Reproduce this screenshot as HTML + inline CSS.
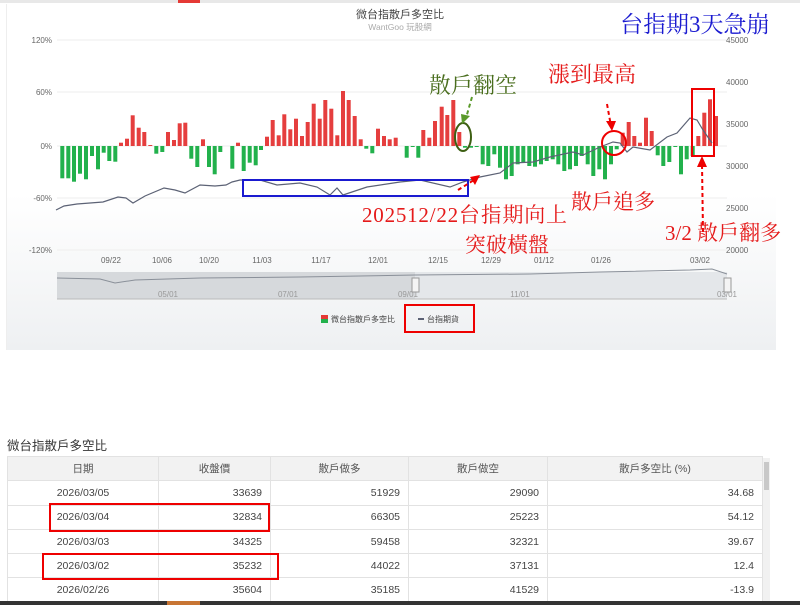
<!DOCTYPE html>
<html><head><meta charset="utf-8">
<style>
*{margin:0;padding:0;box-sizing:border-box}
body{width:800px;height:605px;background:#fff;position:relative;overflow:hidden;font-family:"Liberation Sans","Noto Sans CJK TC",sans-serif;color:#333}
.abs{position:absolute}
table{border-collapse:collapse;position:absolute;left:7px;top:456px;width:756px;font-size:10.5px;color:#444}
td,th{border:1px solid #e2e2e2;height:24.3px;font-weight:normal}
th{background:#f2f2f2;text-align:center;color:#555}
td{text-align:right;padding-right:8px}
td:first-child{text-align:center;padding:0}
</style></head><body>
<div class="abs" style="left:0;top:0;width:800px;height:3px;background:#e8e8e8"></div>
<div class="abs" style="left:178px;top:0;width:22px;height:3px;background:#e53935"></div>
<div class="abs" style="left:6px;top:4px;width:770px;height:346px;background:linear-gradient(#fff 0%,#fff 55%,#eef0f2 100%);border-left:1px solid #eee"></div>
<svg class="abs" style="left:0;top:0" width="800" height="360" id="ch">
<g stroke="#eee" stroke-width="1">
<line x1="57" y1="40" x2="727" y2="40"/><line x1="57" y1="92" x2="727" y2="92"/><line x1="57" y1="146" x2="727" y2="146"/><line x1="57" y1="198" x2="727" y2="198"/><line x1="57" y1="250" x2="727" y2="250"/>
</g>
<g font-size="8" fill="#666" font-family="Liberation Sans">
<text x="52" y="43" text-anchor="end">120%</text><text x="52" y="95" text-anchor="end">60%</text><text x="52" y="149" text-anchor="end">0%</text><text x="52" y="201" text-anchor="end">-60%</text><text x="52" y="253" text-anchor="end">-120%</text>
<text x="726" y="43">45000</text><text x="726" y="85">40000</text><text x="726" y="127">35000</text><text x="726" y="169">30000</text><text x="726" y="211">25000</text><text x="726" y="253">20000</text>
<g text-anchor="middle"><text x="111" y="263">09/22</text><text x="162" y="263">10/06</text><text x="209" y="263">10/20</text><text x="262" y="263">11/03</text><text x="321" y="263">11/17</text><text x="378" y="263">12/01</text><text x="438" y="263">12/15</text><text x="491" y="263">12/29</text><text x="544" y="263">01/12</text><text x="601" y="263">01/26</text><text x="700" y="263">03/02</text></g>
</g>
<text x="400" y="18" text-anchor="middle" font-size="11" fill="#444">微台指散戶多空比</text>
<text x="400" y="30" text-anchor="middle" font-size="8.5" fill="#aaa">WantGoo 玩股網</text>
<g id="bars"></g>
<polyline fill="none" stroke="#5c6275" stroke-width="1.2" points="56,210 64,206 77,204 90,203 103,202 118,197 126,198 133,203 145,196 164,188 175,190 185,193 200,185 215,186 226,185 232,182 240,180 260,180 277,185 300,183 317,187 330,195 337,188 343,195 367,187 400,182 420,180 450,187 463,182 480,177 500,173 513,163 533,162 550,157 573,152 583,155 600,147 613,142 620,143 627,152 633,147 650,150 667,137 677,133 690,118 697,120 703,130 712,143"/>
<!-- navigator -->
<rect x="57" y="272" width="670" height="27" fill="#e4e7ea"/>
<rect x="57" y="272" width="358" height="27" fill="#d6d9dc"/>
<polyline fill="none" stroke="#8a9099" stroke-width="1" points="57,278 100,279 115,283 135,280 200,278 300,277 415,275 530,274 600,272 690,270 712,269 727,274"/>
<line x1="57" y1="299" x2="727" y2="299" stroke="#bbb"/>
<g font-size="8" fill="#999" text-anchor="middle"><text x="168" y="297">05/01</text><text x="288" y="297">07/01</text><text x="408" y="297">09/01</text><text x="520" y="297">11/01</text><text x="727" y="297">03/01</text></g>
<rect x="412" y="278" width="7" height="14" fill="#f4f4f4" stroke="#999"/>
<rect x="724" y="278" width="7" height="14" fill="#f4f4f4" stroke="#999"/>
<!-- legend -->
<rect x="321" y="315" width="7" height="4" fill="#e53935"/><rect x="321" y="319" width="7" height="4" fill="#22b14c"/>
<text x="331" y="322" font-size="8" fill="#444">微台指散戶多空比</text>
<line x1="418" y1="319" x2="424" y2="319" stroke="#5c6275" stroke-width="2"/>
<text x="427" y="322" font-size="8" fill="#444">台指期貨</text>
<rect x="405" y="305" width="69" height="27" fill="none" stroke="#e00" stroke-width="2"/>
<!-- annotations -->
<rect x="243" y="180" width="225" height="16" fill="none" stroke="#1a1ad0" stroke-width="2"/>
<rect x="692" y="89" width="22" height="67" fill="none" stroke="#e00" stroke-width="2"/>
<ellipse cx="463" cy="137" rx="8" ry="14" fill="none" stroke="#3d5f13" stroke-width="2"/>
<circle cx="614" cy="143" r="12" fill="none" stroke="#e00" stroke-width="2"/>
<g stroke-dasharray="4,3" stroke-width="2" fill="none">
<line x1="472" y1="97" x2="466" y2="118" stroke="#5a9a2a"/>
<line x1="607" y1="104" x2="611" y2="126" stroke="#e00"/>
<line x1="703" y1="232" x2="702" y2="164" stroke="#e00"/>
<line x1="458" y1="190" x2="474" y2="180" stroke="#e00"/>
</g>
<polygon points="462,124 461,114 470,116" fill="#5a9a2a"/>
<polygon points="612,131 606,121 616,121" fill="#e00"/>
<polygon points="702,156 697,167 707,167" fill="#e00"/>
<polygon points="480,175 470,177 475,185" fill="#e00"/>
<g font-family="Liberation Serif,'Noto Serif CJK TC','Noto Serif CJK SC',serif">
<text x="620" y="32" font-size="23" fill="#1a1ad0">台指期3天急崩</text>
<text x="429" y="93" font-size="22" fill="#4a6e1e">散戶翻空</text>
<text x="548" y="82" font-size="22" fill="#e51a1a">漲到最高</text>
<text x="571" y="209" font-size="21" fill="#e51a1a">散戶追多</text>
<text x="362" y="222" font-size="21" fill="#e51a1a" textLength="205">202512/22台指期向上</text>
<text x="465" y="252" font-size="21" fill="#e51a1a">突破橫盤</text>
<text x="665" y="240" font-size="21" fill="#e51a1a">3/2 散戶翻多</text>
</g>
</svg>
<div class="abs" style="left:7px;top:435px;font-size:12.5px;color:#333">微台指散戶多空比</div>
<table>
<tr><th style="width:151px">日期</th><th style="width:112px">收盤價</th><th style="width:138px">散戶做多</th><th style="width:139px">散戶做空</th><th>散戶多空比 (%)</th></tr>
<tr><td>2026/03/05</td><td>33639</td><td>51929</td><td>29090</td><td>34.68</td></tr>
<tr><td>2026/03/04</td><td>32834</td><td>66305</td><td>25223</td><td>54.12</td></tr>
<tr><td>2026/03/03</td><td>34325</td><td>59458</td><td>32321</td><td>39.67</td></tr>
<tr><td>2026/03/02</td><td>35232</td><td>44022</td><td>37131</td><td>12.4</td></tr>
<tr><td>2026/02/26</td><td>35604</td><td>35185</td><td>41529</td><td>-13.9</td></tr>
</table>
<div class="abs" style="left:763px;top:458px;width:7px;height:143px;background:#f1f1f1"></div>
<div class="abs" style="left:764px;top:462px;width:5px;height:28px;background:#c8c8c8"></div>
<div class="abs" style="left:49px;top:503px;width:221px;height:29px;border:2px solid #e00"></div>
<div class="abs" style="left:42px;top:553px;width:237px;height:27px;border:2px solid #e00"></div>
<div class="abs" style="left:0;top:601px;width:800px;height:4px;background:#333"></div>
<div class="abs" style="left:167px;top:601px;width:33px;height:4px;background:#c87533"></div>
<script>
var z1=[[187,-97],[205,-97],[222,-107],[240,-83],[258,-100],[276,-30],[294,-70],[311,-20],[328,-45],[346,-47],[363,10],[381,22],[398,92],[416,55],[433,42],[451,3],[469,-23],[487,-18],[504,42],[522,18],[539,68],[556,70],[574,-38],[592,-63],[609,20],[627,-63],[644,-85],[661,-18],[697,-68],[714,10],[731,-75],[749,-50],[767,-58],[783,-12],[801,28],[818,78],[836,32],[853,95],[871,50],[888,82],[906,30],[923,72],[941,127],[959,82],[976,138],[994,112],[1012,32],[1029,165],[1046,138],[1064,90],[1082,20],[1099,-8],[1117,-22],[1134,52],[1152,30],[1169,20],[1187,25]];
var z2=[[20,-35],[38,-3],[55,-35],[70,48],[88,25],[105,75],[125,118],[142,93],[160,138],[178,42],[195,-5],[213,-5],[230,-3],[248,-55],[265,-60],[283,-25],[300,-65],[318,-100],[335,-90],[353,-55],[370,-50],[388,-60],[405,-62],[423,-55],[440,-45],[458,-40],[475,-55],[493,-75],[510,-70],[528,-60],[545,-30],[563,-55],[580,-90],[598,-70],[615,-100],[633,-55],[650,-10],[668,40],[686,72],[703,30],[720,10],[738,85],[755,45],[773,-28],[790,-60],[808,-48],[826,-3],[843,-85],[860,-40],[878,-30],[895,30],[913,100],[930,140],[948,90]];
var s='';
function add(x,v){var h=Math.abs(v)/3,c=v>0?'#e53e3e':'#22b14c';var y=v>0?146-h:146;s+='<rect x="'+(x-2).toFixed(1)+'" y="'+y.toFixed(1)+'" width="4" height="'+Math.max(h,1).toFixed(1)+'" fill="'+c+'"/>';}
z1.forEach(function(b){add(b[0]/3,b[1])});
z2.forEach(function(b){add(400+b[0]/3,b[1])});
document.getElementById('bars').innerHTML=s;
</script>
</body></html>
